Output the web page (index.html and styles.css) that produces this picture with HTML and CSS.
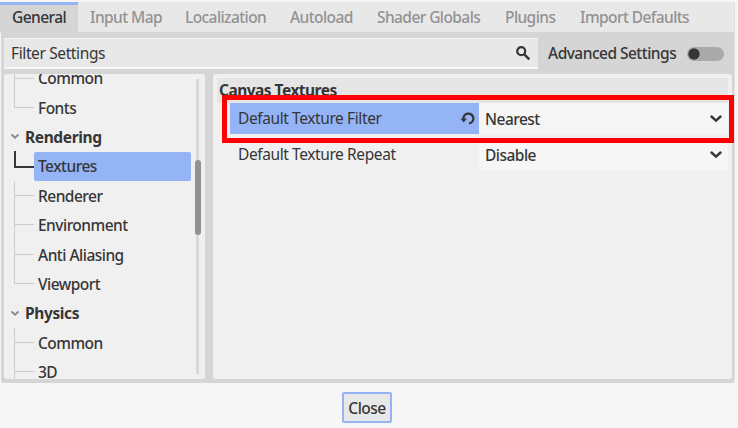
FILE: index.html
```html
<!DOCTYPE html>
<html lang="en">
<head>
<meta charset="utf-8">
<title>Project Settings</title>
<link rel="stylesheet" href="styles.css">
</head>
<body>
<main class="panel">
  <nav class="tabs">
    <span class="tab active">General</span>
    <span class="tab input-map">Input Map</span>
    <span class="tab localization">Localization</span>
    <span class="tab autoload">Autoload</span>
    <span class="tab shader">Shader Globals</span>
    <span class="tab plugins">Plugins</span>
    <span class="tab import">Import Defaults</span>
  </nav>
  <div class="toolbar">
    <div class="search"><span>Filter Settings</span>
      <svg width="16" height="16" viewBox="0 0 16 16"><circle cx="6.200" cy="6.200" r="4" fill="none" stroke="#363636" stroke-width="2.200"/><path d="M9.300 9.300l5 5" stroke="#363636" stroke-width="2.500"/></svg>
    </div>
    <span class="advanced">Advanced Settings</span>
    <span class="toggle"></span>
  </div>
  <div class="columns">
    <aside class="tree">
      <ul class="rows">
        <li class="item">Common</li>
        <li class="item last">Fonts</li>
        <li class="group"><svg width="10" height="7" viewBox="0 0 10 7"><path d="M1.500 1.500L5 4.700 8.500 1.500" fill="none" stroke="#8c8c8c" stroke-width="2"/></svg>Rendering</li>
        <li class="item selected"><span>Textures</span></li>
        <li class="item">Renderer</li>
        <li class="item">Environment</li>
        <li class="item">Anti Aliasing</li>
        <li class="item last">Viewport</li>
        <li class="group"><svg width="10" height="7" viewBox="0 0 10 7"><path d="M1.500 1.500L5 4.700 8.500 1.500" fill="none" stroke="#8c8c8c" stroke-width="2"/></svg>Physics</li>
        <li class="item">Common</li>
        <li class="item">3D</li>
      </ul>
      <div class="scroll"><div class="thumb"></div></div>
    </aside>
    <section class="inspector">
      <h2>Canvas Textures</h2>
      <div class="prop current">
        <div class="name"><span>Default Texture Filter</span>
          <svg width="16" height="16" viewBox="0 0 16 16"><path d="M3.500 9.500a5 5 0 1 1 5.500 4" fill="none" stroke="#363636" stroke-width="2.200"/><path d="M.5 8.500h6.500L3.700 12.500z" fill="#363636"/></svg>
        </div>
        <div class="value"><span>Nearest</span><svg width="12" height="8" viewBox="0 0 12 8"><path d="M1.500 1.500L6 5.600l4.500-4.100" fill="none" stroke="#363636" stroke-width="2.400" stroke-linecap="round"/></svg></div>
        <div class="marker"></div>
      </div>
      <div class="prop">
        <div class="name"><span>Default Texture Repeat</span></div>
        <div class="value"><span>Disable</span><svg width="12" height="8" viewBox="0 0 12 8"><path d="M1.500 1.500L6 5.600l4.500-4.100" fill="none" stroke="#363636" stroke-width="2.400" stroke-linecap="round"/></svg></div>
      </div>
    </section>
  </div>
</main>
<footer><button>Close</button></footer>
</body>
</html>
```
FILE: styles.css
```css
* { box-sizing: border-box; }
body { margin: 0; width: 738px; height: 428px; overflow: hidden; padding: 2px 3px 0 1px; background: #f6f6f6; color: #363636; font: 500 15.500px/20px "Noto Sans", sans-serif; letter-spacing: -0.520px; white-space: nowrap; }
svg { display: block; flex: none; }
.panel { height: 381px; background: #d5d5d5; border-right: 1px solid #e0e0e0; border-radius: 0 2px 3px 3px; }
.tabs { display: flex; height: 30px; margin-left: -1px; background: #e8e8e8; color: #929292; letter-spacing: -0.580px; }
.tab { flex: none; padding: 5px 0 0 12px; }
.active { width: 78px; padding-top: 2px; background: #d5d5d5; color: #363636; border-top: 3px solid #94b4f6; }
.input-map { width: 95px; }
.localization { width: 105px; }
.autoload { width: 87px; }
.shader { width: 128px; }
.plugins { width: 75px; }
.toolbar { display: flex; align-items: center; height: 42px; padding: 6px 0 5px 3px; }
.search { display: flex; justify-content: space-between; align-items: center; width: 534px; height: 31px; padding: 0 7px 0; background: #e8e8e8; border: solid #f6f6f6; border-width: 1px 0 2px; font-weight: 400; letter-spacing: -0.380px; }
.advanced { width: 128px; margin: -1px 0 0 10px; }
.toggle { width: 37px; height: 14px; margin-left: 11px; border-radius: 7px; background: radial-gradient(circle at 7px 7px, #363636 5.200px, #aaa 6px); }
.columns { display: flex; gap: 8px; height: 305px; margin: 0 3px; }
.tree { display: flex; justify-content: space-between; flex: none; width: 201px; padding: 0 4px 0 0; overflow: hidden; background: #f0f0f0; border-radius: 3px; }
.rows { width: 187px; margin: -10.500px 0 0; padding: 0; list-style: none; }
.item, .group { position: relative; display: flex; align-items: center; height: 29.400px; }
.item { padding-left: 34px; }
.item::before { content: ""; position: absolute; left: 10px; top: 0; width: 1px; height: 100%; background: #ccc; }
.item.last::before { height: 50%; }
.item::after { content: ""; position: absolute; left: 10px; top: 14px; width: 20px; height: 1px; background: #ccc; }
.selected { padding-left: 30px; }
.selected span { flex: 1; height: 29px; padding: 4px 0 0 4px; border-radius: 2px; background: #94b4f6; }
.selected::before { top: -1px; height: 16px; width: 2px; background: #363636; }
.selected::after { width: 20px; height: 2px; background: #363636; }
.group { padding-left: 6px; gap: 5px; font-weight: 700; letter-spacing: -0.380px; }
.scroll { width: 6px; padding-top: 81px; margin: 5px 0; background: linear-gradient(to right, transparent 1px, #d8d8d8 1px, #d8d8d8 4px, transparent 4px); }
.thumb { width: 6px; height: 75px; border-radius: 3px; background: #929292; }
.inspector { flex: none; width: 519px; padding: 4px 4px 0; background: #f0f0f0; border-radius: 3px; }
h2 { height: 25px; margin: 0; padding: 2px 0 0 2px; background: #e5e5e5; font-size: 15.500px; font-weight: 700; line-height: 20px; }
.prop { position: relative; display: flex; height: 31px; margin: 0 0 5px 13px; }
.current { z-index: 1; }
.name { display: flex; align-items: center; justify-content: space-between; width: 249px; padding: 0 3px 1px 8px; font-weight: 400; letter-spacing: -0.400px; }
.current .name { background: #94b4f6; }
.value { display: flex; align-items: center; justify-content: space-between; width: 249px; padding: 0 6px; background: #f6f6f6; }
.marker { position: absolute; left: -8px; top: -8px; width: 512px; height: 48px; border: 5px solid #f00; }
footer { display: flex; justify-content: center; padding: 9px 2px 0 0; }
button { width: 50px; height: 31px; padding: 0; color: #363636; background: #e8e8e8; border: 2px solid #94b4f6; font: inherit; letter-spacing: inherit; border-radius: 2px; }
```
